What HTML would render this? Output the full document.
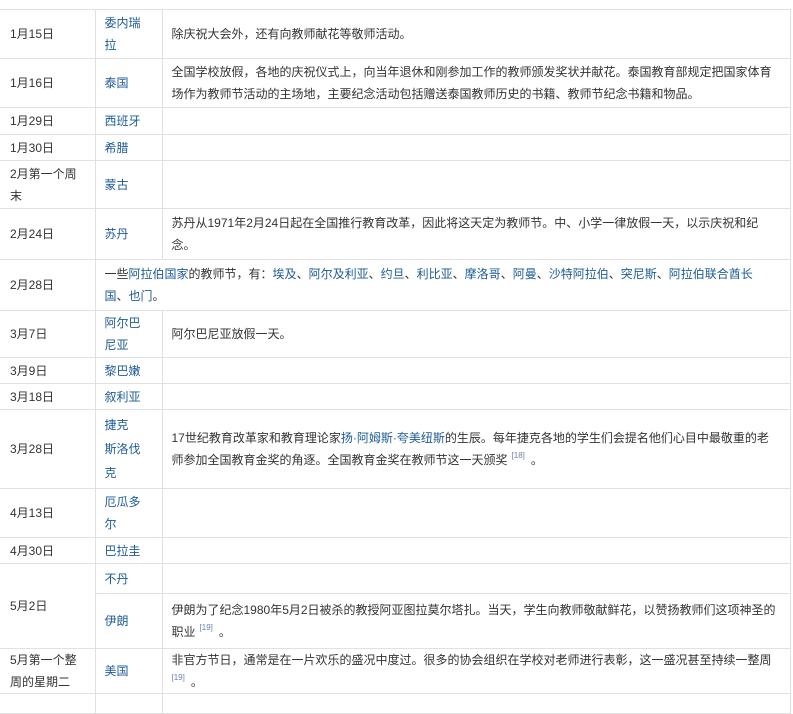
<!DOCTYPE html>
<html><head><meta charset="utf-8"><style>
html,body{margin:0;padding:0;background:#fff;width:793px;height:696px;overflow:hidden}
table{position:absolute;top:9px;left:0;border-collapse:collapse;table-layout:fixed;width:790px;font-family:"Liberation Sans","Noto Sans CJK SC",sans-serif;font-size:12px;color:#333;line-height:22px}
td{border:1px solid #e1e1e1;padding:0 0 0 9px;vertical-align:middle;white-space:nowrap;overflow:hidden}
td.a{border-left:none;padding-left:10px}
td.c{padding-left:9px}
a{color:#1d5b97;text-decoration:none}
sup{font-size:8px;color:#6b80ad;vertical-align:6px;line-height:0;margin:0 6px 0 4px}
</style></head><body>
<table>
<colgroup><col style="width:95px"><col style="width:67px"><col style="width:628px"></colgroup>
<tr style="height:49px"><td class="a">1月15日</td><td><a>委内瑞<br>拉</a></td><td class="c">除庆祝大会外，还有向教师献花等敬师活动。</td></tr>
<tr style="height:49px"><td class="a">1月16日</td><td><a>泰国</a></td><td class="c">全国学校放假，各地的庆祝仪式上，向当年退休和刚参加工作的教师颁发奖状并献花。泰国教育部规定把国家体育<br>场作为教师节活动的主场地，主要纪念活动包括赠送泰国教师历史的书籍、教师节纪念书籍和物品。</td></tr>
<tr style="height:27px"><td class="a">1月29日</td><td><a>西班牙</a></td><td></td></tr>
<tr style="height:26px"><td class="a">1月30日</td><td><a>希腊</a></td><td></td></tr>
<tr style="height:48px"><td class="a">2月第一个周<br>末</td><td><a>蒙古</a></td><td></td></tr>
<tr style="height:51px"><td class="a">2月24日</td><td><a>苏丹</a></td><td class="c">苏丹从1971年2月24日起在全国推行教育改革，因此将这天定为教师节。中、小学一律放假一天，以示庆祝和纪<br>念。</td></tr>
<tr style="height:51px"><td class="a">2月28日</td><td colspan="2">一些<a>阿拉伯国家</a>的教师节，有：<a>埃及</a>、<a>阿尔及利亚</a>、<a>约旦</a>、<a>利比亚</a>、<a>摩洛哥</a>、<a>阿曼</a>、<a>沙特阿拉伯</a>、<a>突尼斯</a>、<a>阿拉伯联合酋长</a><br><a>国</a>、<a>也门</a>。</td></tr>
<tr style="height:47px"><td class="a">3月7日</td><td><a>阿尔巴<br>尼亚</a></td><td class="c">阿尔巴尼亚放假一天。</td></tr>
<tr style="height:26px"><td class="a">3月9日</td><td><a>黎巴嫩</a></td><td></td></tr>
<tr style="height:26px"><td class="a">3月18日</td><td><a>叙利亚</a></td><td></td></tr>
<tr style="height:79px"><td class="a">3月28日</td><td style="line-height:24px"><a>捷克<br>斯洛伐<br>克</a></td><td class="c">17世纪教育改革家和教育理论家<a>扬·阿姆斯·夸美纽斯</a>的生辰。每年捷克各地的学生们会提名他们心目中最敬重的老<br>师参加全国教育金奖的角逐。全国教育金奖在教师节这一天颁奖<sup>[18]</sup>。</td></tr>
<tr style="height:49px"><td class="a">4月13日</td><td><a>厄瓜多<br>尔</a></td><td></td></tr>
<tr style="height:26px"><td class="a">4月30日</td><td><a>巴拉圭</a></td><td></td></tr>
<tr style="height:30px"><td class="a" rowspan="2">5月2日</td><td><a>不丹</a></td><td></td></tr>
<tr style="height:55px"><td><a>伊朗</a></td><td class="c">伊朗为了纪念1980年5月2日被杀的教授阿亚图拉莫尔塔扎。当天，学生向教师敬献鲜花，以赞扬教师们这项神圣的<br>职业<sup>[19]</sup>。</td></tr>
<tr style="height:45px"><td class="a">5月第一个整<br>周的星期二</td><td><a>美国</a></td><td class="c">非官方节日，通常是在一片欢乐的盛况中度过。很多的协会组织在学校对老师进行表彰，这一盛况甚至持续一整周<br><sup style="margin-left:0">[19]</sup>。</td></tr>
<tr style="height:20px"><td class="a"></td><td></td><td></td></tr>
</table>
</body></html>
